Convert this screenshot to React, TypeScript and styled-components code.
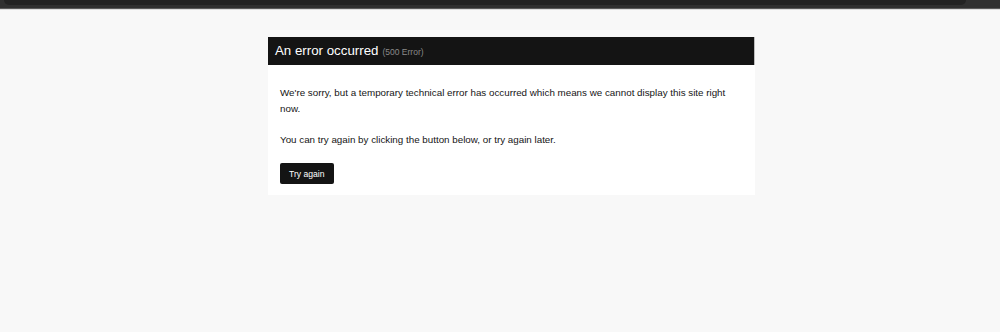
import React from "react";
import styled, { createGlobalStyle } from "styled-components";

const GlobalStyle = createGlobalStyle`
  html, body {
    margin: 0;
    padding: 0;
    background: #f8f8f8;
    font-family: Arial, "Liberation Sans", sans-serif;
  }
`;

const Page = styled.div`
  width: 1000px;
  height: 332px;
  background: #f8f8f8;
  overflow: hidden;
  font-family: Arial, "Liberation Sans", sans-serif;
`;

const TopBar = styled.div`
  height: 8px;
  background: #303030;
  border-bottom: 1px solid #5a5a5a;
  box-shadow: 0 1px 0 #dcdcdc;
  padding: 0 34px 0 4px;
`;

const TopPanel = styled.div`
  height: 5px;
  background: #232323;
  border-radius: 0 0 8px 8px;
`;

const Content = styled.main`
  padding: 28px 0 0 268px;
`;

const Card = styled.section`
  width: 487px;
  background: #ffffff;
`;

const Header = styled.header`
  height: 28px;
  background: #141414;
  border-right: 1px solid #bdbdbd;
  display: flex;
  align-items: center;
  padding: 0 7px;
  box-sizing: border-box;
`;

const Title = styled.h1`
  margin: 0;
  font-size: 13.3px;
  font-weight: normal;
  color: #ffffff;
  line-height: 1;
`;

const Code = styled.span`
  font-size: 8.5px;
  color: #8a8a8a;
  margin-left: 4px;
`;

const Body = styled.div`
  padding: 20px 24px 11px 12px;
`;

const Text = styled.p`
  margin: 0 0 15px;
  font-size: 9.8px;
  line-height: 16px;
  color: #151515;
`;

const Button = styled.button`
  display: block;
  height: 21px;
  padding: 0 9px;
  border: none;
  border-radius: 2px;
  background: #141414;
  color: #ffffff;
  font-family: Arial, "Liberation Sans", sans-serif;
  font-size: 8.6px;
  cursor: pointer;
`;

const App = () => {
  return (
    <Page>
      <GlobalStyle />
      <TopBar>
        <TopPanel />
      </TopBar>
      <Content>
        <Card>
          <Header>
            <Title>
              An error occurred<Code>(500 Error)</Code>
            </Title>
          </Header>
          <Body>
            <Text>
              We're sorry, but a temporary technical error has occurred which
              means we cannot display this site right now.
            </Text>
            <Text>
              You can try again by clicking the button below, or try again
              later.
            </Text>
            <Button>Try again</Button>
          </Body>
        </Card>
      </Content>
    </Page>
  );
};

export default App;
